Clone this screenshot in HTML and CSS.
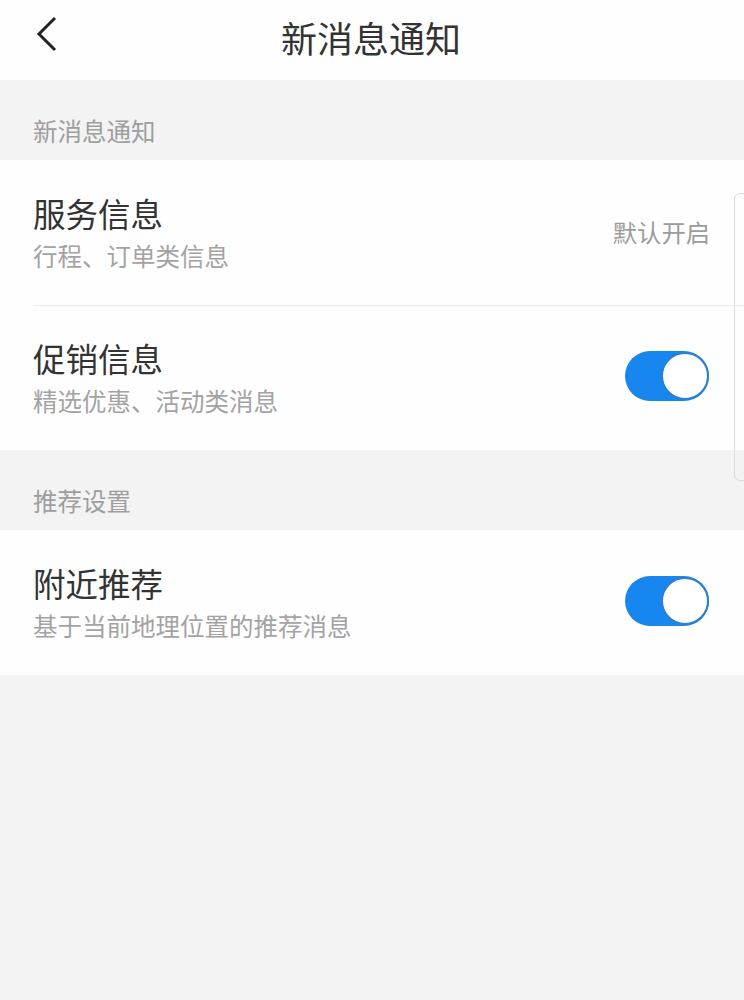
FILE: index.html
```html
<!DOCTYPE html>
<html lang="zh-CN">
<head>
    <meta charset="UTF-8">
    <meta name="viewport" content="width=device-width, initial-scale=1.0">
    <title>新消息通知</title>
    <link rel="stylesheet" href="styles.css">
</head>
<body>
    <div class="page">
        <header class="topbar">
            <a class="back" href="#">
                <svg width="24" height="36" viewBox="0 0 24 36">
                    <polyline points="20,2 4,18 20,34" fill="none" stroke="#222" stroke-width="3"/>
                </svg>
            </a>
            <h1 class="title">新消息通知</h1>
        </header>

        <div class="section-label">新消息通知</div>
        <div class="group">
            <div class="row">
                <div class="row-text">
                    <div class="row-title">服务信息</div>
                    <div class="row-sub">行程、订单类信息</div>
                </div>
                <span class="row-note">默认开启</span>
            </div>
            <div class="row">
                <div class="row-text">
                    <div class="row-title">促销信息</div>
                    <div class="row-sub">精选优惠、活动类消息</div>
                </div>
                <span class="toggle on"><span class="knob"></span></span>
            </div>
        </div>

        <div class="section-label">推荐设置</div>
        <div class="group">
            <div class="row">
                <div class="row-text">
                    <div class="row-title">附近推荐</div>
                    <div class="row-sub">基于当前地理位置的推荐消息</div>
                </div>
                <span class="toggle on"><span class="knob"></span></span>
            </div>
        </div>

        <div class="edge-tab"></div>
    </div>
</body>
</html>
```

FILE: styles.css
```css
html, body {
    margin: 0;
    padding: 0;
}
body {
    font-family: "Noto Sans CJK SC", "Noto Sans", sans-serif;
    background-color: #f3f3f3;
    color: #333;
}
.page {
    position: relative;
    min-height: 1000px;
}
.topbar {
    height: 80px;
    background-color: #fefefe;
    display: flex;
    align-items: center;
    justify-content: center;
    position: relative;
}
.back {
    position: absolute;
    left: 35px;
    top: 16px;
    display: flex;
}
.title {
    margin: 0;
    font-size: 36px;
    font-weight: normal;
    color: #333;
    line-height: 1;
    margin-top: -7px;
    margin-left: -2px;
}
.section-label {
    height: 80px;
    box-sizing: border-box;
    padding: 36px 0 0 33px;
    font-size: 24.5px;
    line-height: 30px;
    color: #9e9e9e;
}
.group {
    background-color: #fefefe;
}
.row {
    height: 145px;
    box-sizing: border-box;
    display: flex;
    align-items: center;
    justify-content: space-between;
    padding: 0 35px 0 33px;
    position: relative;
}
.row + .row::before {
    content: "";
    position: absolute;
    left: 33px;
    right: 0;
    top: 0;
    border-top: 1px solid #ececec;
}
.row-text {
    display: flex;
    flex-direction: column;
    gap: 8px;
    margin-top: -2px;
}
.row-title {
    font-size: 32.5px;
    line-height: 40px;
    color: #333;
}
.row-sub {
    font-size: 24.5px;
    line-height: 30px;
    color: #a3a3a3;
}
.row-note {
    font-size: 24.3px;
    color: #9c9c9c;
    margin-right: -1px;
    margin-top: -2px;
}
.toggle {
    width: 84px;
    height: 50px;
    border-radius: 25px;
    background-color: #1886ef;
    display: flex;
    align-items: center;
    justify-content: flex-end;
    box-sizing: border-box;
    margin-top: -4px;
}
.knob {
    width: 48px;
    height: 48px;
    border-radius: 50%;
    background-color: #fff;
    border: 2px solid #2b7fd2;
    box-sizing: border-box;
}
.edge-tab {
    position: absolute;
    right: -6px;
    top: 193px;
    width: 16px;
    height: 288px;
    border: 1px solid #dcdcdc;
    border-radius: 6px;
    box-sizing: border-box;
}
```
